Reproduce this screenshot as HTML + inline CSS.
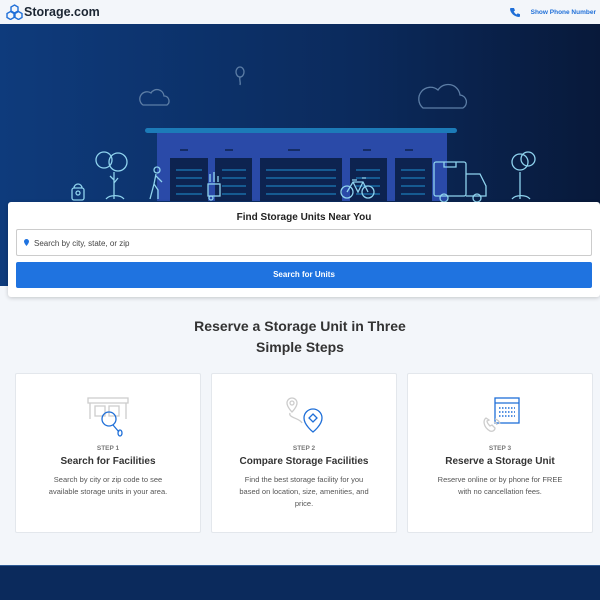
<!DOCTYPE html><html><head><style>
*{margin:0;padding:0;box-sizing:border-box}
body{width:600px;height:600px;overflow:hidden;background:#f3f6fa;font-family:"Liberation Sans",sans-serif;position:relative}
.hdr{height:24px;background:#f3f6fa;position:relative}
.logo{position:absolute;left:24px;top:5px;font-size:12.5px;font-weight:bold;color:#1c2633}
.ph{position:absolute;right:4px;top:9px;font-size:6.5px;font-weight:bold;color:#1f6fd8}
.hero{position:absolute;top:24px;left:0;width:600px;height:262px;background:linear-gradient(90deg,#0e3b7c 0%,#0b2a5c 60%,#08193a 100%)}
.card{position:absolute;left:8px;top:202px;width:592px;height:95px;background:#fff;border-radius:3px;box-shadow:0 1px 4px rgba(0,0,0,.2)}
.card h3{font-size:10px;text-align:center;margin-top:10px;color:#222}
.inp{position:absolute;left:8px;top:27px;width:576px;height:27px;border:1px solid #ccc;border-radius:2px;font-size:8px;color:#444;padding:9px 0 0 17px}
.btn{position:absolute;left:8px;top:60px;width:576px;height:26px;background:#1f73e0;border-radius:2px;color:#fff;font-size:8px;font-weight:bold;text-align:center;line-height:26px}
h2{position:absolute;top:316px;width:600px;text-align:center;font-size:14px;line-height:21px;color:#333}
.s{position:absolute;top:373px;width:186px;height:160px;background:#fff;border:1px solid #e3e7ec;border-radius:2px;text-align:center}
.s .st{position:absolute;top:71px;width:100%;font-size:6.5px;font-weight:bold;color:#777}
.s .t{position:absolute;top:82px;width:100%;font-size:10px;font-weight:bold;color:#333}
.s .d{position:absolute;top:100px;left:26px;right:26px;font-size:7.5px;line-height:12px;color:#555}
.s svg{position:absolute;left:70px;top:22px}
.ft{position:absolute;top:565px;left:0;width:600px;height:35px;background:#0b2a5c;border-top:1px solid #2e5a94}
</style></head><body>
<div class="hdr">
<svg style="position:absolute;left:6px;top:4px" width="17" height="16" viewBox="0 0 17 16" fill="none" stroke="#1f6fd8" stroke-width="1.4"><path d="M8.5 1L12 3v4L8.5 9 5 7V3z"/><path d="M4.5 7.5L8 9.5v4L4.5 15.5 1 13.5v-4z"/><path d="M12.5 7.5L16 9.5v4l-3.5 2-3.5-2v-4z"/></svg>
<div class="logo">Storage.com</div>
<svg style="position:absolute;left:510px;top:7px" width="10" height="10" viewBox="0 0 10 10"><path d="M2 1l2 0 1 2.5-1.3 1a6 6 0 003 3l1-1.3L10 7.2V9c0 .5-.5 1-1 1C4 9.6.4 6 0 2c0-.6.4-1 1-1z" fill="#1f6fd8"/></svg>
<div class="ph">Show Phone Number</div>
</div>
<div class="hero">
<svg width="600" height="180" viewBox="0 24 600 180" fill="none" stroke-width="1.3">
<g stroke="#5d7ea6"><path d="M143 105h24a5 5 0 00-3-9 7 7 0 00-13-3 6 6 0 00-8 12z"/><path d="M423 108h40a7 7 0 00-3-13 12 12 0 00-22-5 9 9 0 00-15 18z"/><ellipse cx="240" cy="72" rx="4" ry="5"/><path d="M240 77c-1 3 1 5 0 8"/></g>
<rect x="145" y="128" width="312" height="5" rx="2.5" fill="#1c7bb8" stroke="none"/>
<rect x="157" y="133" width="290" height="68" fill="#2a4aa8" stroke="none"/>
<g fill="#0d2350" stroke="none"><rect x="170" y="158" width="38" height="43"/><rect x="215" y="158" width="37" height="43"/><rect x="260" y="158" width="82" height="43"/><rect x="350" y="158" width="37" height="43"/><rect x="395" y="158" width="37" height="43"/></g>
<g stroke="#1c7bb8"><path d="M176 170h26M176 178h26M176 186h26M176 194h26M222 170h24M222 178h24M222 186h24M222 194h24M266 170h70M266 178h70M266 186h70M266 194h70M356 170h24M356 178h24M356 186h24M356 194h24M401 170h24M401 178h24M401 186h24M401 194h24"/><path d="M180 150h8M225 150h8M288 150h12M363 150h8M405 150h8" stroke="#0d2350" stroke-width="1.5"/></g>
<g stroke="#8fd3ee"><circle cx="104" cy="160" r="8"/><circle cx="118" cy="162" r="9"/><path d="M114 172v27M106 199a10 6 0 0118 0M118 178l-4 5M110 176l4 4"/><circle cx="520" cy="162" r="8"/><circle cx="528" cy="159" r="7"/><path d="M520 172v27M512 199a10 6 0 0118 0"/><circle cx="157" cy="170" r="3"/><path d="M156 174l-2 10 4 6v9M154 184l-4 15M156 176l6 6"/><rect x="72" y="188" width="12" height="12" rx="2"/><circle cx="78" cy="193" r="2"/><path d="M74 188a4 4 0 018 0"/><rect x="208" y="184" width="12" height="12"/><path d="M210 182v-8M214 182v-10M218 182v-6"/><circle cx="211" cy="198" r="2"/><circle cx="347" cy="192" r="6"/><circle cx="368" cy="192" r="6"/><path d="M347 192l6-10h10l5 10M353 182l5 10 5-10M352 180h5M362 178h4"/><rect x="434" y="162" width="32" height="34" rx="2"/><path d="M466 174h14l6 12v10h-20M444 162v5h12v-5"/><circle cx="444" cy="198" r="4"/><circle cx="477" cy="198" r="4"/></g>
</svg>
</div>
<div class="card"><h3>Find Storage Units Near You</h3>
<div class="inp"><svg style="position:absolute;left:7px;top:9px" width="5" height="7" viewBox="0 0 5 7"><path d="M2.5 0a2.5 2.5 0 012.5 2.5C5 4 2.5 7 2.5 7S0 4 0 2.5A2.5 2.5 0 012.5 0z" fill="#1f73e0"/></svg>Search by city, state, or zip</div>
<div class="btn">Search for Units</div></div>
<h2>Reserve a Storage Unit in Three<br>Simple Steps</h2>
<div class="s" style="left:15px"><svg width="46" height="46" viewBox="0 0 46 46" fill="none" stroke-width="1.3"><g stroke="#ccc"><path d="M2 2h40v5H2zM4 7v16M40 7v16M9 10h10v10H9zM23 10h10v10H23z"/></g><g stroke="#1f6fd8"><circle cx="23" cy="23" r="7"/><path d="M27 29l6 7"/><ellipse cx="34" cy="37" rx="2" ry="3"/></g></svg><div class="st">STEP 1</div><div class="t">Search for Facilities</div><div class="d">Search by city or zip code to see available storage units in your area.</div></div>
<div class="s" style="left:211px"><svg width="46" height="46" viewBox="0 0 46 46" fill="none" stroke-width="1.3"><g stroke="#ccc"><path d="M10 2a5 5 0 015 5c0 4-5 9-5 9s-5-5-5-9a5 5 0 015-5zM8 17c-2 5 10 5 12 10"/><circle cx="10" cy="7" r="2"/></g><g stroke="#1f6fd8"><path d="M31 13a9 9 0 019 9c0 7-9 14-9 14s-9-7-9-14a9 9 0 019-9z"/><path d="M31 18l4 4-4 4-4-4z"/></g></svg><div class="st">STEP 2</div><div class="t">Compare Storage Facilities</div><div class="d">Find the best storage facility for you based on location, size, amenities, and price.</div></div>
<div class="s" style="left:407px"><svg width="46" height="46" viewBox="0 0 46 46" fill="none" stroke-width="1.3"><g stroke="#1f6fd8"><rect x="17" y="2" width="24" height="25"/><path d="M17 7h24"/><path d="M21 12h16M21 16h16M21 20h16" stroke-dasharray="1.5 1.5" stroke-width="1.6"/></g><g stroke="#ccc"><path d="M8 22c-3 2-3 9 4 13 3 1 5-1 5-3l-3-3-2 1c-2-2-3-4-3-5l2-1z"/><path d="M16 26a4 4 0 013 3M17 23a7 7 0 015 5"/></g></svg><div class="st">STEP 3</div><div class="t">Reserve a Storage Unit</div><div class="d">Reserve online or by phone for FREE with no cancellation fees.</div></div>
<div class="ft"></div>
</body></html>
